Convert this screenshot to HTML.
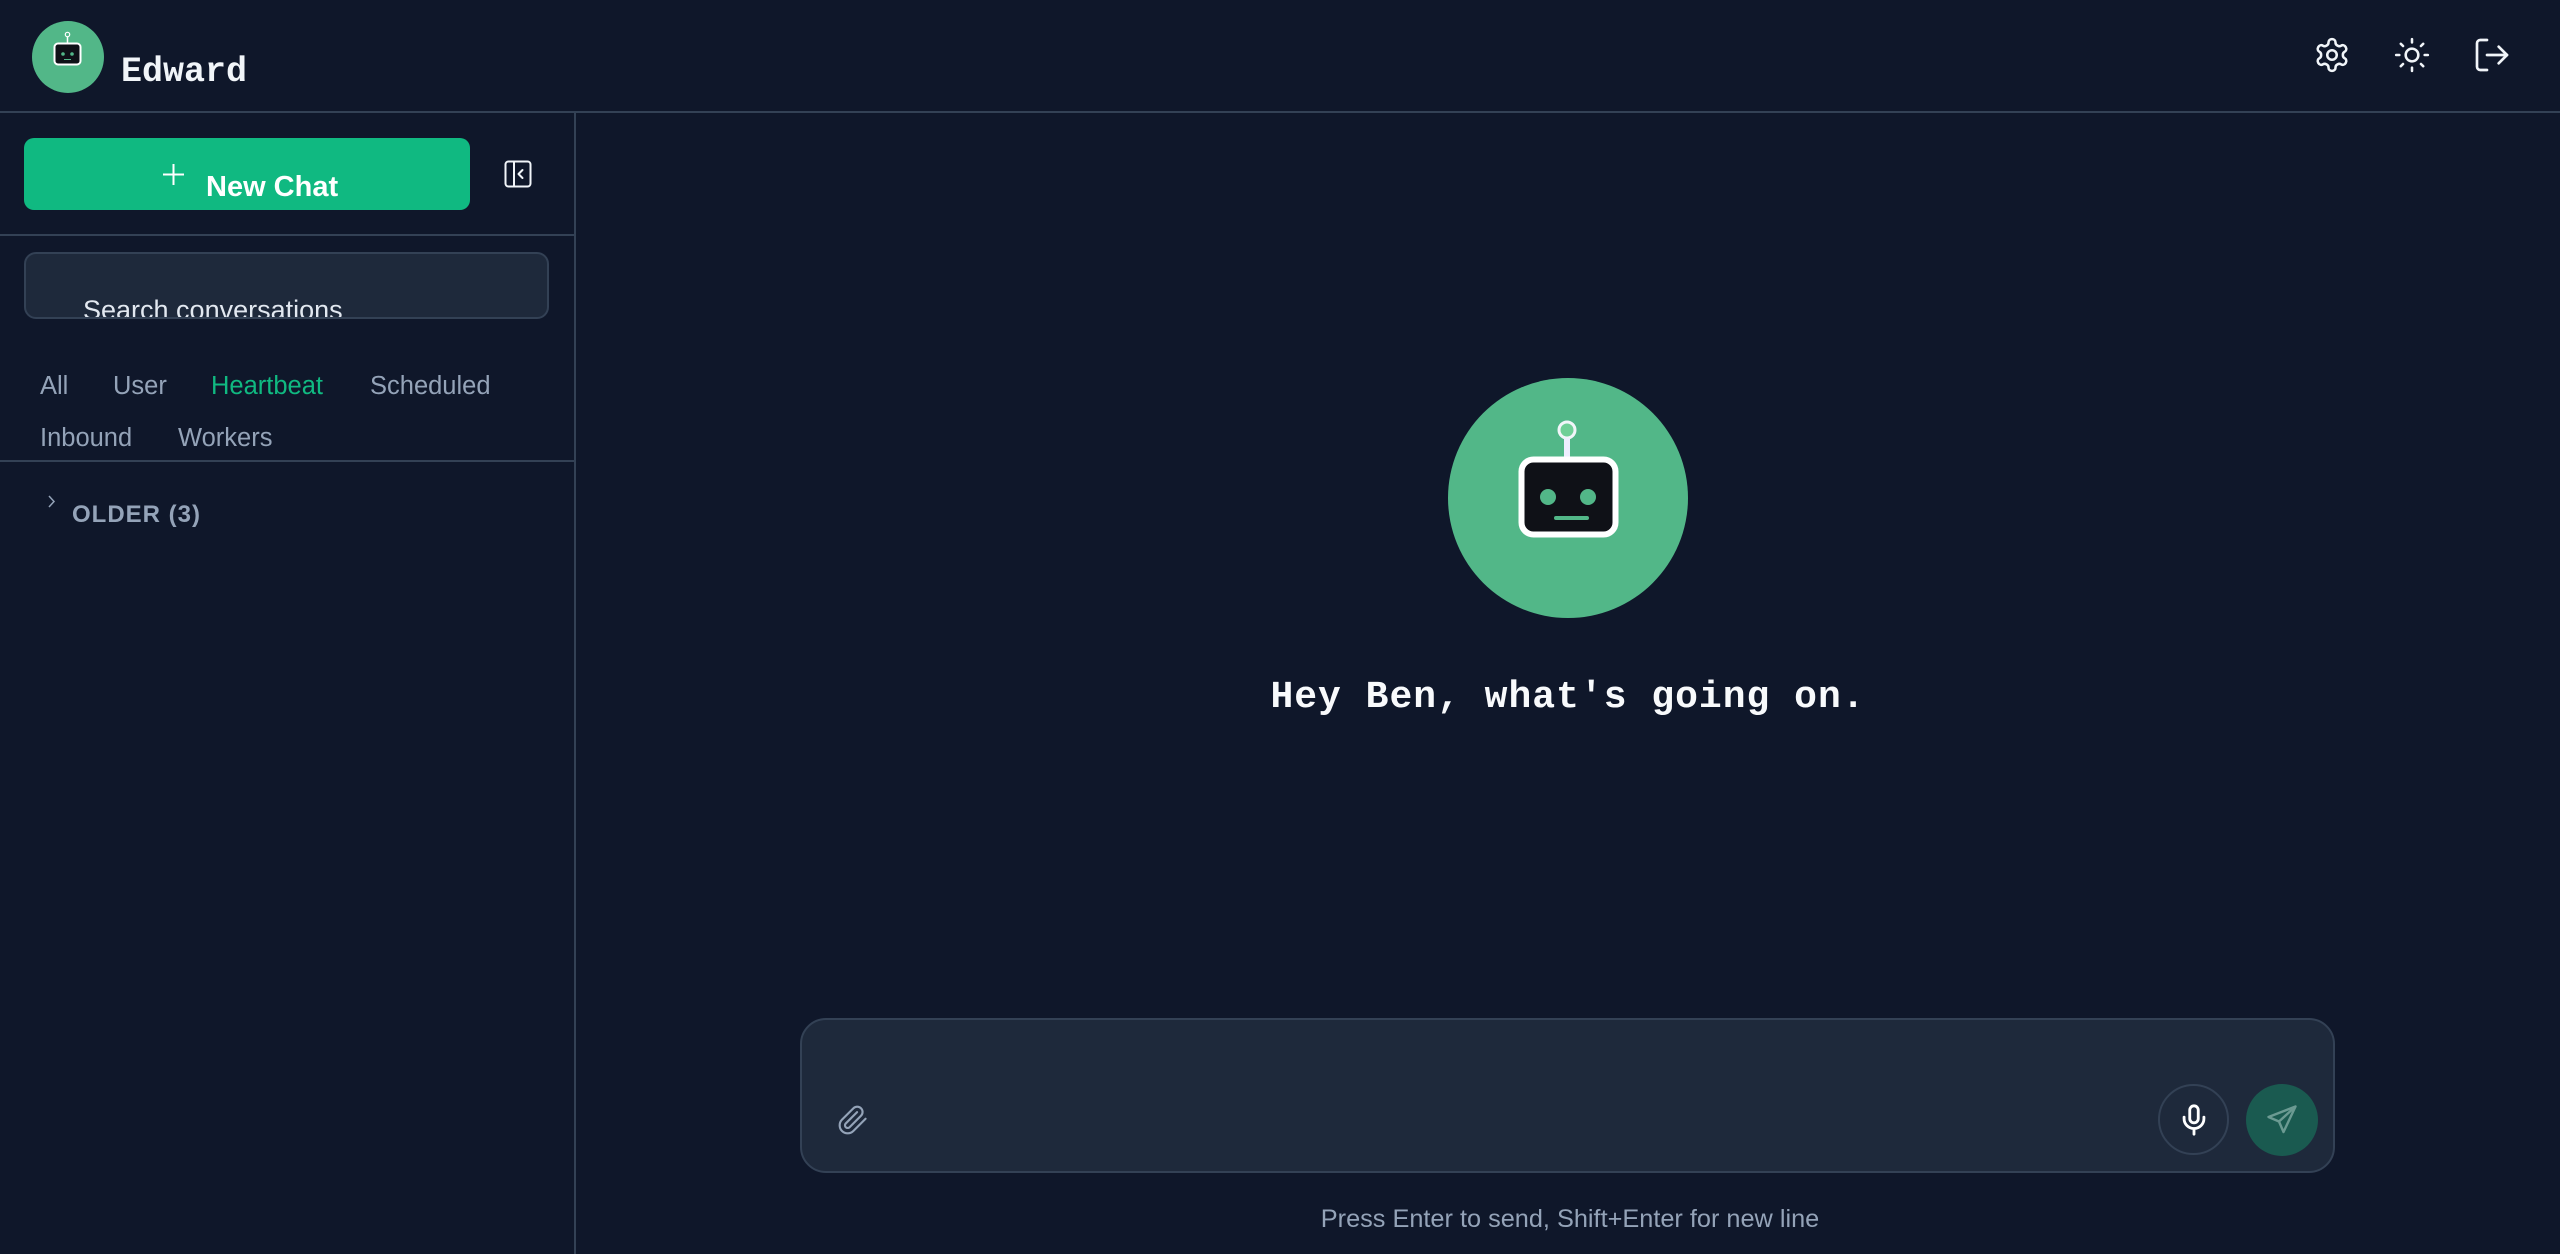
<!DOCTYPE html>
<html><head><meta charset="utf-8"><style>
*{box-sizing:border-box;margin:0;padding:0}
body{width:2560px;height:1254px;background:#0f172a;font-family:"Liberation Sans",sans-serif;position:relative;overflow:hidden;color:#f1f5f9}
.abs{position:absolute}
.mono{font-family:"Liberation Mono",monospace;font-weight:bold}
.tab{position:absolute;font-size:25.5px;color:#94a3b8;line-height:1}
</style></head><body>
<!-- header -->
<div class="abs" style="left:32px;top:21px;width:72px;height:72px;border-radius:50%;background:#52b788"></div>
<svg class="abs" style="left:32px;top:21px" width="72" height="72" viewBox="0 0 72 72">
<circle cx="35.5" cy="13.5" r="2.2" fill="none" stroke="#fff" stroke-width="1.2"/>
<line x1="35.5" y1="15.5" x2="35.5" y2="22" stroke="#fff" stroke-width="1.5"/>
<rect x="22.5" y="22.5" width="26" height="21" rx="3.5" fill="#0f1117" stroke="#fff" stroke-width="2"/>
<circle cx="31" cy="33" r="1.8" fill="#52b788"/><circle cx="40" cy="33" r="1.8" fill="#52b788"/>
<line x1="32" y1="38.5" x2="39" y2="38.5" stroke="#52b788" stroke-width="1"/>
</svg>
<div class="abs mono" style="left:121px;top:50px;font-size:35px;line-height:44px;color:#f1f5f9">Edward</div>
<svg class="abs" style="left:2313px;top:36px" width="38" height="38" viewBox="0 0 24 24" fill="none" stroke="#f1f5f9" stroke-width="1.6" stroke-linecap="round" stroke-linejoin="round"><path d="M12.22 2h-.44a2 2 0 0 0-2 2v.18a2 2 0 0 1-1 1.73l-.43.25a2 2 0 0 1-2 0l-.15-.08a2 2 0 0 0-2.730.73l-.22.38a2 2 0 0 0 .73 2.73l.15.1a2 2 0 0 1 1 1.72v.51a2 2 0 0 1-1 1.74l-.15.09a2 2 0 0 0-.73 2.73l.22.38a2 2 0 0 0 2.73.73l.15-.08a2 2 0 0 1 2 0l.43.25a2 2 0 0 1 1 1.73V20a2 2 0 0 0 2 2h.44a2 2 0 0 0 2-2v-.18a2 2 0 0 1 1-1.73l.43-.25a2 2 0 0 1 2 0l.15.08a2 2 0 0 0 2.73-.73l.22-.39a2 2 0 0 0-.73-2.730l-.15-.08a2 2 0 0 1-1-1.74v-.5a2 2 0 0 1 1-1.74l.15-.09a2 2 0 0 0 .73-2.73l-.22-.38a2 2 0 0 0-2.73-.73l-.15.08a2 2 0 0 1-2 0l-.43-.25a2 2 0 0 1-1-1.73V4a2 2 0 0 0-2-2z"/><circle cx="12" cy="12" r="3"/></svg>
<svg class="abs" style="left:2393px;top:36px" width="38" height="38" viewBox="0 0 24 24" fill="none" stroke="#f1f5f9" stroke-width="1.6" stroke-linecap="round"><circle cx="12" cy="12" r="4"/><path d="M12 2v2M12 20v2M4.93 4.93l1.41 1.41M17.66 17.66l1.41 1.41M2 12h2M20 12h2M6.34 17.66l-1.41 1.41M19.07 4.93l-1.41 1.41"/></svg>
<svg class="abs" style="left:2472px;top:35px" width="40" height="40" viewBox="0 0 24 24" fill="none" stroke="#f1f5f9" stroke-width="1.6" stroke-linecap="round" stroke-linejoin="round"><path d="M9 21H5a2 2 0 0 1-2-2V5a2 2 0 0 1 2-2h4"/><path d="M16 17l5-5-5-5"/><path d="M21 12H9"/></svg>
<div class="abs" style="left:0;top:111px;width:2560px;height:2px;background:#334155"></div>
<!-- sidebar -->
<div class="abs" style="left:574px;top:113px;width:2px;height:1141px;background:#334155"></div>
<div class="abs" style="left:24px;top:138px;width:446px;height:72px;border-radius:10px;background:#10b981"></div>
<svg class="abs" style="left:162px;top:163px" width="23" height="23" viewBox="0 0 23 23" stroke="#fff" stroke-width="2"><path d="M11.5 1v21M1 11.5h21"/></svg>
<div class="abs" style="left:206px;top:169px;font-size:29px;font-weight:bold;color:#fff;line-height:36px">New Chat</div>
<svg class="abs" style="left:504px;top:160px" width="28" height="28" viewBox="0 0 28 28" fill="none" stroke="#f1f5f9" stroke-width="2" stroke-linecap="round" stroke-linejoin="round"><rect x="1.5" y="1.5" width="25" height="25" rx="3"/><path d="M10 1.5v25M18.5 10l-4 4 4 4"/></svg>
<div class="abs" style="left:0;top:234px;width:574px;height:2px;background:#334155"></div>
<div class="abs" style="left:24px;top:252px;width:525px;height:67px;border-radius:12px;background:#1e293b;border:2px solid #334155;overflow:hidden">
<div style="position:absolute;left:57px;top:40px;font-size:27px;color:#e2e8f0;line-height:32px;white-space:nowrap">Search conversations</div></div>
<div class="tab" style="left:40px;top:374px">All</div>
<div class="tab" style="left:113px;top:374px">User</div>
<div class="tab" style="left:211px;top:374px;color:#10b981">Heartbeat</div>
<div class="tab" style="left:370px;top:374px">Scheduled</div>
<div class="tab" style="left:40px;top:426px">Inbound</div>
<div class="tab" style="left:178px;top:426px">Workers</div>
<div class="abs" style="left:0;top:460px;width:574px;height:2px;background:#334155"></div>
<svg class="abs" style="left:46px;top:494px" width="12" height="15" viewBox="0 0 12 15" fill="none" stroke="#94a3b8" stroke-width="1.5"><path d="M3 2l5 5.5L3 13"/></svg>
<div class="abs" style="left:72px;top:503px;font-size:24px;font-weight:bold;color:#94a3b8;letter-spacing:1px;line-height:24px">OLDER (3)</div>
<!-- main -->
<div class="abs" style="left:1448px;top:378px;width:240px;height:240px;border-radius:50%;background:#52b788"></div>
<svg class="abs" style="left:1448px;top:378px" width="240" height="240" viewBox="0 0 240 240">
<circle cx="119" cy="52" r="8" fill="#6fcf97" stroke="#f1f5f9" stroke-width="3"/>
<rect x="116" y="60" width="6" height="20" fill="#eef"/>
<rect x="73.5" y="81.5" width="94" height="75" rx="12" fill="#0f1117" stroke="#fff" stroke-width="6"/>
<circle cx="100" cy="119" r="8" fill="#52b788"/><circle cx="140" cy="119" r="8" fill="#52b788"/>
<line x1="108" y1="140" x2="139" y2="140" stroke="#52b788" stroke-width="4" stroke-linecap="round"/>
</svg>
<div class="abs mono" style="left:1068px;top:674px;width:1000px;text-align:center;font-size:38px;letter-spacing:1px;line-height:48px;color:#f8fafc">Hey Ben, what's going on.</div>
<div class="abs" style="left:800px;top:1018px;width:1535px;height:155px;border-radius:26px;background:#1e293b;border:2px solid #334155"></div>
<svg class="abs" style="left:836px;top:1104px" width="34" height="32" viewBox="0 0 24 24" fill="none" stroke="#94a3b8" stroke-width="1.6" stroke-linecap="round" stroke-linejoin="round"><path d="M21.44 11.05l-9.19 9.19a6 6 0 0 1-8.49-8.49l8.57-8.57A4 4 0 1 1 18 8.84l-8.59 8.57a2 2 0 0 1-2.830-2.83l8.49-8.48"/></svg>
<div class="abs" style="left:2158px;top:1084px;width:71px;height:71px;border-radius:50%;border:2px solid #334155"></div>
<svg class="abs" style="left:2177px;top:1103px" width="34" height="34" viewBox="0 0 24 24" fill="none" stroke="#fff" stroke-width="2" stroke-linecap="round" stroke-linejoin="round"><rect x="9" y="2" width="6" height="12" rx="3"/><path d="M19 10v1a7 7 0 0 1-14 0v-1M12 18v4"/></svg>
<div class="abs" style="left:2246px;top:1084px;width:72px;height:72px;border-radius:50%;background:#1a5a50"></div>
<svg class="abs" style="left:2264px;top:1102px" width="36" height="36" viewBox="0 0 24 24" fill="none" stroke="#6b9a92" stroke-width="1.6" stroke-linejoin="round"><path d="M21 3L3 10l7 3 3 7z"/><path d="M10 13l11-10"/></svg>
<div class="abs" style="left:1070px;top:1204px;width:1000px;text-align:center;font-size:25.3px;color:#94a3b8;line-height:30px">Press Enter to send, Shift+Enter for new line</div>
</body></html>
